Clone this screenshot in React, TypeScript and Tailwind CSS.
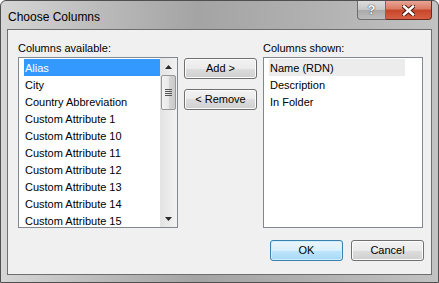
import React from "react";

const available = [
  "Alias",
  "City",
  "Country Abbreviation",
  "Custom Attribute 1",
  "Custom Attribute 10",
  "Custom Attribute 11",
  "Custom Attribute 12",
  "Custom Attribute 13",
  "Custom Attribute 14",
  "Custom Attribute 15",
];

const shown = ["Name (RDN)", "Description", "In Folder"];

function Btn({ children, primary }: { children: React.ReactNode; primary?: boolean }) {
  return (
    <div
      className={
        "w-[73px] h-[21px] rounded-[3px] border flex items-center justify-center text-black " +
        (primary
          ? "border-[#3c7fb1] bg-[linear-gradient(#eaf6fd_0%,#d9f0fc_50%,#bee6fd_50%,#a7d9f5_100%)] shadow-[inset_0_0_0_1px_#cdeffe]"
          : "border-[#707070] bg-[linear-gradient(#f2f2f2_0%,#ebebeb_50%,#dddddd_50%,#cfcfcf_100%)] shadow-[inset_0_0_0_1px_#fcfcfc]")
      }
    >
      {children}
    </div>
  );
}

export default function App() {
  return (
    <div
      className="w-[439px] h-[283px] flex flex-col border border-[#4f4f4f] rounded-t-[6px] bg-[linear-gradient(90deg,#d6d6d6_0%,#b8b8b8_25%,#a4a4a4_45%,#b0b0b0_70%,#c2c2c2_100%)] text-[11px] overflow-hidden"
      style={{ fontFamily: '"Liberation Sans", Arial, sans-serif' }}
    >
      <div className="h-[28px] flex items-start">
        <div className="pl-[7px] pt-[7px] text-[12px] text-black">Choose Columns</div>
        <div className="ml-auto mr-[6px] flex shrink-0">
          <div className="w-[29px] h-[19px] shrink-0 border border-[#6c6c6c] border-t-0 rounded-bl-[4px] bg-[linear-gradient(#dcdcdc_0%,#c6c6c6_50%,#a9a9a9_50%,#bdbdbd_100%)] flex items-center justify-center text-white font-bold text-[13px] [text-shadow:0_0_1px_#333,0_0_1px_#333]">
            ?
          </div>
          <div className="w-[46px] h-[19px] shrink-0 border border-[#6c2a1c] border-t-0 border-l-0 rounded-br-[4px] bg-[linear-gradient(#e8a594_0%,#d97a63_45%,#c7452a_50%,#d65f43_100%)] flex items-center justify-center">
            <svg width="13" height="11" viewBox="0 0 13 11">
              <path d="M2 1.5 L11 9.5 M11 1.5 L2 9.5" stroke="#4a1a10" strokeWidth="4.5" strokeLinecap="square" />
              <path d="M2 1.5 L11 9.5 M11 1.5 L2 9.5" stroke="#ffffff" strokeWidth="2.5" strokeLinecap="square" />
            </svg>
          </div>
        </div>
      </div>
      <div className="mx-[6px] mb-[7px] flex-1 border border-[#6e6e6e] bg-[#f0f0f0] flex flex-col pl-[10px] pr-[7px]">
        <div className="flex mt-[10px]">
          <div className="flex flex-col w-[160px]">
            <div className="h-[17px] text-black">Columns available:</div>
            <div className="h-[171px] border border-[#828790] bg-white flex">
              <div className="flex-1 pt-[1px] pl-[5px]">
                {available.map((t, i) => (
                  <div
                    key={t}
                    className={
                      "h-[17px] leading-[17px] pt-[1px] pl-[1px] whitespace-nowrap " +
                      (i === 0 ? "bg-[#3399ff] text-white" : "text-black")
                    }
                  >
                    {t}
                  </div>
                ))}
              </div>
              <div className="w-[17px] bg-[linear-gradient(90deg,#e3e3e3,#f2f2f2)] flex flex-col">
                <div className="h-[17px] flex items-center justify-center">
                  <svg width="7" height="4" viewBox="0 0 7 4">
                    <path d="M3.5 0 L7 4 L0 4 Z" fill="#2a2a2a" />
                  </svg>
                </div>
                <div className="h-[35px] mx-[1px] rounded-[2px] border border-[#979797] bg-[linear-gradient(90deg,#f3f3f3_0%,#e8e8e8_50%,#d6d6d6_51%,#cacaca_100%)] flex flex-col items-center justify-center gap-[1px]">
                  <div className="w-[7px] h-[1px] bg-[#555]" />
                  <div className="w-[7px] h-[1px] bg-[#555]" />
                  <div className="w-[7px] h-[1px] bg-[#555]" />
                  <div className="w-[7px] h-[1px] bg-[#555]" />
                </div>
                <div className="flex-1" />
                <div className="h-[17px] flex items-center justify-center">
                  <svg width="7" height="4" viewBox="0 0 7 4">
                    <path d="M0 0 L7 0 L3.5 4 Z" fill="#2a2a2a" />
                  </svg>
                </div>
              </div>
            </div>
          </div>
          <div className="flex flex-col gap-[10px] ml-[6px] mt-[18px]">
            <Btn>Add &gt;</Btn>
            <Btn>&lt; Remove</Btn>
          </div>
          <div className="flex flex-col w-[160px] ml-[6px]">
            <div className="h-[17px] text-black">Columns shown:</div>
            <div className="h-[171px] border border-[#828790] bg-white pt-[1px] pl-[5px] pr-[17px]">
              {shown.map((t, i) => (
                <div
                  key={t}
                  className={
                    "h-[17px] leading-[17px] pt-[1px] pl-[1px] text-black whitespace-nowrap " +
                    (i === 0 ? "bg-[#ececec]" : "")
                  }
                >
                  {t}
                </div>
              ))}
            </div>
          </div>
        </div>
        <div className="flex justify-end gap-[8px] mt-[12px]">
          <Btn primary>OK</Btn>
          <Btn>Cancel</Btn>
        </div>
      </div>
    </div>
  );
}
